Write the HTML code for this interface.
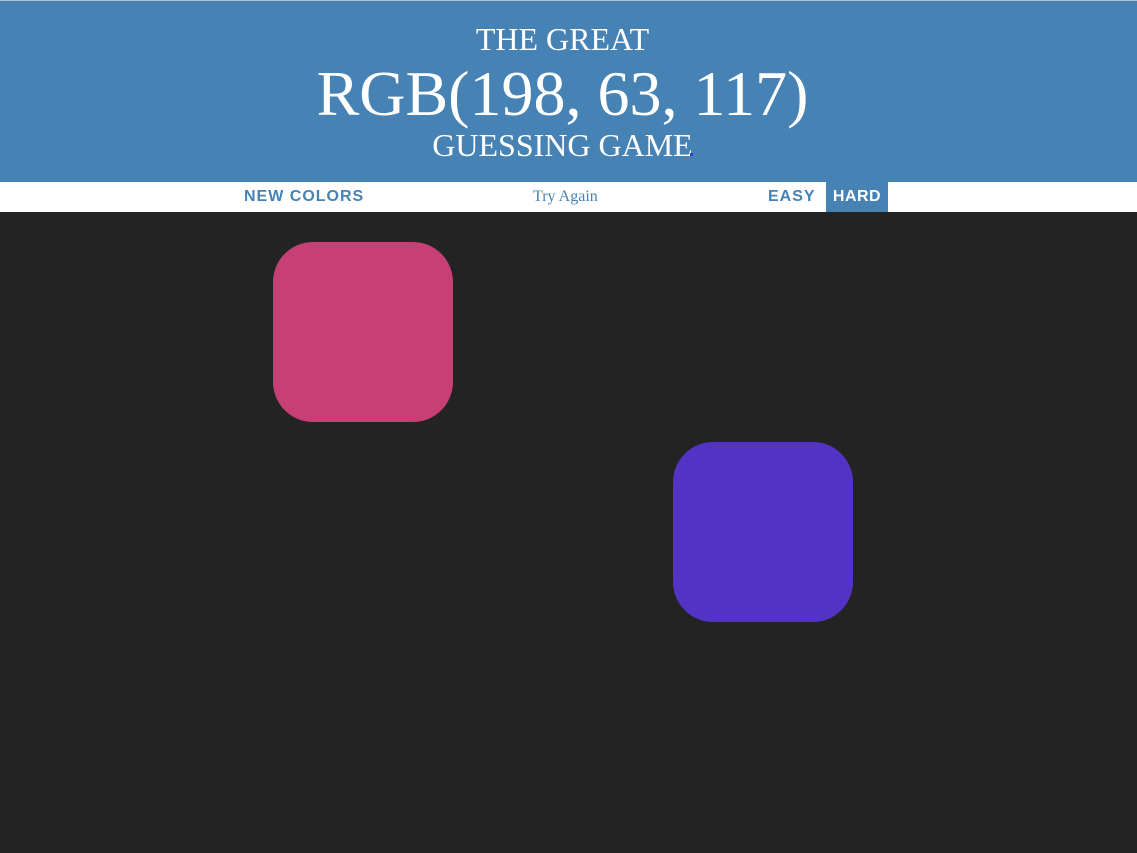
<!DOCTYPE html>
<html><head><style>
body{margin:0;background:#232323;width:1137px;height:853px;overflow:hidden;position:relative;font-family:"Liberation Sans",sans-serif}
#h{position:absolute;left:0;top:0;width:1137px;height:182px;background:#4682b4;border-top:1px solid #a9c4dd;box-sizing:border-box;color:#fff;font-family:"Liberation Serif",serif;text-align:center}
.t{position:absolute;left:-6px;width:100%;white-space:nowrap}
#s{position:absolute;left:0;top:182px;width:1137px;height:30px;background:#fff}
.b{position:absolute;top:0;height:30px;line-height:29px;font-weight:bold;font-size:16px;letter-spacing:1px;color:#4682b4}
.sq{position:absolute;width:180px;height:180px;border-radius:40px}
</style></head><body>
<div id="h">
<div class="t" style="top:20px;font-size:32px;line-height:36px">THE GREAT</div>
<div class="t" style="top:59px;font-size:64px;line-height:68px">RGB(198, 63, 117)</div>
<div class="t" style="top:126px;font-size:32px;line-height:36px">GUESSING GAME<span style="display:inline-block;width:3px;height:3px;background:#3a3ad0;vertical-align:baseline;margin-left:-3px"></span></div>
</div>
<div id="s">
<div class="b" style="left:244px">NEW COLORS</div>
<div class="b" style="left:533px;font-family:'Liberation Serif',serif;font-weight:normal;letter-spacing:0;line-height:30px">Try Again</div>
<div class="b" style="left:768px">EASY</div>
<div class="b" style="left:826px;width:62px;background:#4682b4;color:#fff;text-align:center;letter-spacing:0.5px">HARD</div>
</div>
<div class="sq" style="left:273px;top:242px;background:#c63f75"></div>
<div class="sq" style="left:673px;top:442px;background:#5233c4"></div>
</body></html>
